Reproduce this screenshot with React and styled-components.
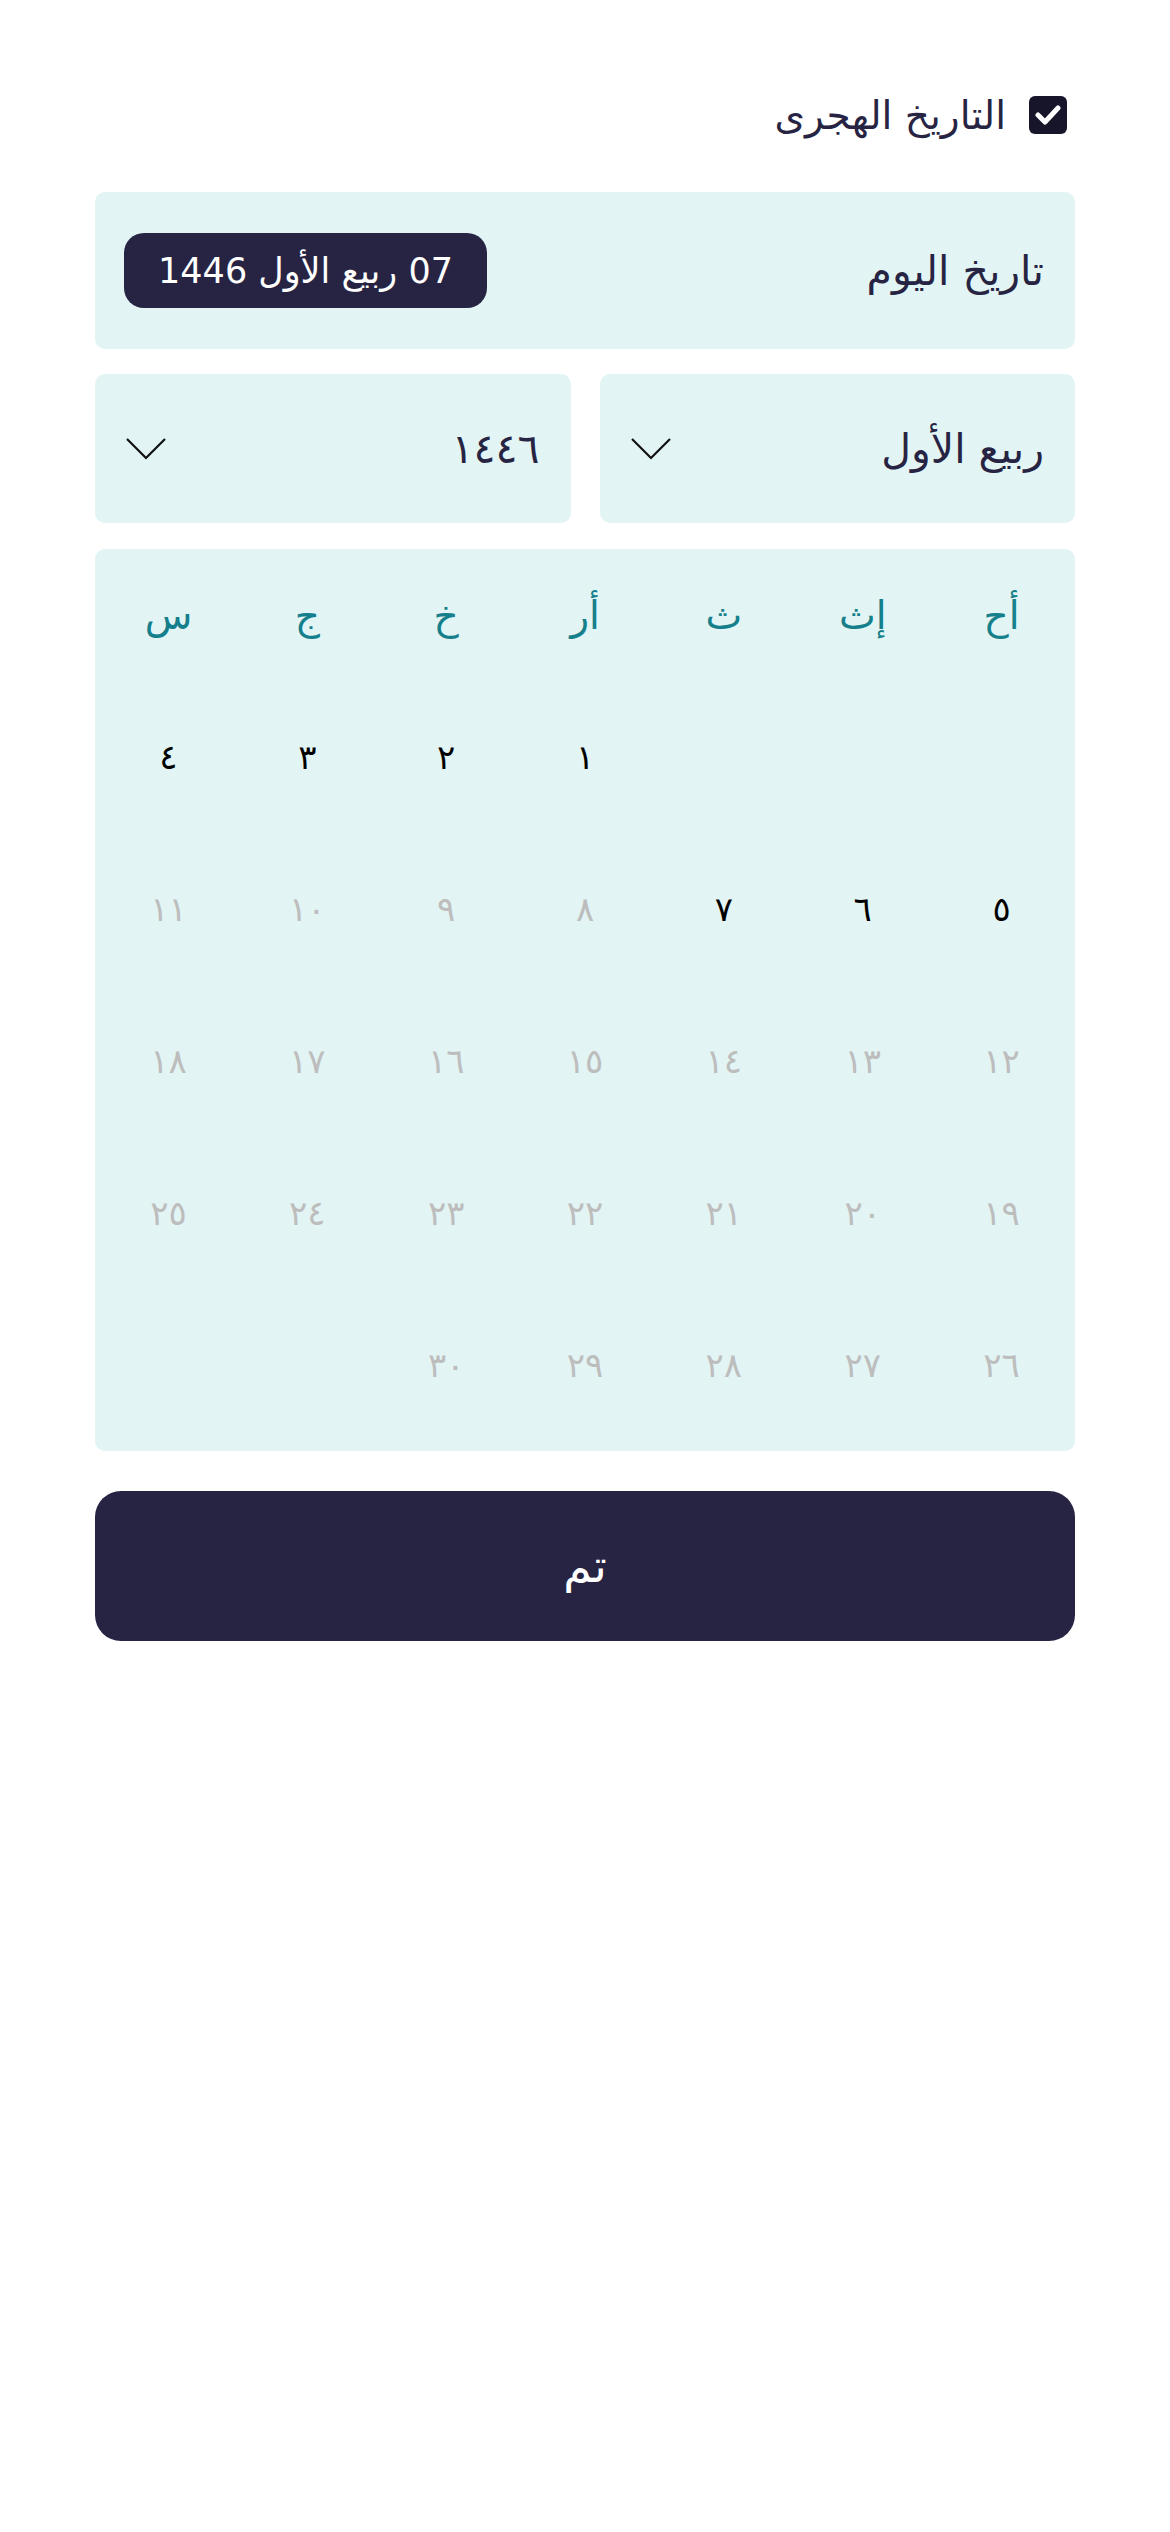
import React from 'react'
import styled, { createGlobalStyle } from 'styled-components'

const GlobalStyle = createGlobalStyle`
    body {
        margin: 0;
        background: #ffffff;
        font-family: "DejaVu Sans", "Noto Sans", sans-serif;
    }
`;

const navy = '#272443';
const panel = '#e2f4f4';

const Page = styled.div`
    direction: rtl;
    width: 1170px;
    min-height: 2532px;
    box-sizing: border-box;
    padding: 96px 95px 0;
`;

const CheckRow = styled.label`
    display: flex;
    align-items: center;
    gap: 23px;
    padding-right: 8px;
    height: 38px;
    margin-bottom: 58px;
    color: ${navy};
    font-size: 39px;
`;

const CheckBox = styled.span`
    width: 38px;
    height: 38px;
    border-radius: 6px;
    background: #16152a;
    display: flex;
    align-items: center;
    justify-content: center;
    flex-shrink: 0;
`;

const TodayCard = styled.div`
    height: 157px;
    background: ${panel};
    border-radius: 10px;
    display: flex;
    align-items: center;
    justify-content: space-between;
    padding: 0 31px 0 29px;
    box-sizing: border-box;
    margin-bottom: 25px;
`;

const Label = styled.span`
    font-size: 41px;
    color: ${navy};
`;

const Badge = styled.span`
    height: 75px;
    min-width: 363px;
    box-sizing: border-box;
    padding: 0 24px;
    border-radius: 20px;
    background: ${navy};
    color: #ffffff;
    font-size: 35px;
    display: flex;
    align-items: center;
    justify-content: center;
`;

const SelectRow = styled.div`
    display: grid;
    grid-template-columns: 1fr 1fr;
    gap: 29px;
    margin-bottom: 26px;
`;

const Select = styled.div`
    height: 149px;
    background: ${panel};
    border-radius: 10px;
    display: flex;
    align-items: center;
    justify-content: space-between;
    padding: 0 31px;
    box-sizing: border-box;
`;

const Calendar = styled.div`
    background: ${panel};
    border-radius: 10px;
    padding: 20px 4px 20px;
    display: grid;
    grid-template-columns: repeat(7, 1fr);
    grid-template-rows: 102px repeat(5, 152px);
    margin-bottom: 40px;
`;

const DayName = styled.div`
    display: flex;
    align-items: center;
    justify-content: center;
    color: #15808b;
    font-size: 39px;
    margin-bottom: 10px;
`;

const Day = styled.div`
    display: flex;
    align-items: center;
    justify-content: center;
    font-size: 34px;
    color: ${({ $muted }) => ($muted ? '#bdbdbd' : '#000000')};
    margin-top: 10px;
    margin-bottom: -10px;
`;

const DoneButton = styled.button`
    width: 100%;
    height: 150px;
    border: 0;
    border-radius: 26px;
    background: ${navy};
    color: #ffffff;
    font-family: inherit;
    font-size: 46px;
    cursor: pointer;
`;

const Chevron = () => (
    <svg width="40" height="22" viewBox="0 0 40 22">
        <polyline points="1,1 20,20 39,1" fill="none" stroke="#111" strokeWidth="2.2" />
    </svg>
);

const dayNames = ['أح', 'إث', 'ث', 'أر', 'خ', 'ج', 'س'];
const toArabic = (n) => String(n).replace(/\d/g, (d) => '٠١٢٣٤٥٦٧٨٩'[d]);

function App() {
    const cells = [null, null, null];
    for (let i = 1; i <= 30; i++) cells.push(i);

    return (
        <Page>
            <GlobalStyle />
            <CheckRow>
                <CheckBox>
                    <svg width="26" height="22" viewBox="0 0 26 22">
                        <polyline points="3,11 10,18 23,4" fill="none" stroke="#fff" strokeWidth="5" strokeLinecap="round" strokeLinejoin="round" />
                    </svg>
                </CheckBox>
                التاريخ الهجرى
            </CheckRow>

            <TodayCard>
                <Label>تاريخ اليوم</Label>
                <Badge>07 ربيع الأول 1446</Badge>
            </TodayCard>

            <SelectRow>
                <Select>
                    <Label>ربيع الأول</Label>
                    <Chevron />
                </Select>
                <Select>
                    <Label>١٤٤٦</Label>
                    <Chevron />
                </Select>
            </SelectRow>

            <Calendar>
                {dayNames.map((d) => (
                    <DayName key={d}>{d}</DayName>
                ))}
                {cells.map((n, i) => (
                    <Day key={i} $muted={n > 7}>{n ? toArabic(n) : ''}</Day>
                ))}
            </Calendar>

            <DoneButton>تم</DoneButton>
        </Page>
    )
}

export default App
